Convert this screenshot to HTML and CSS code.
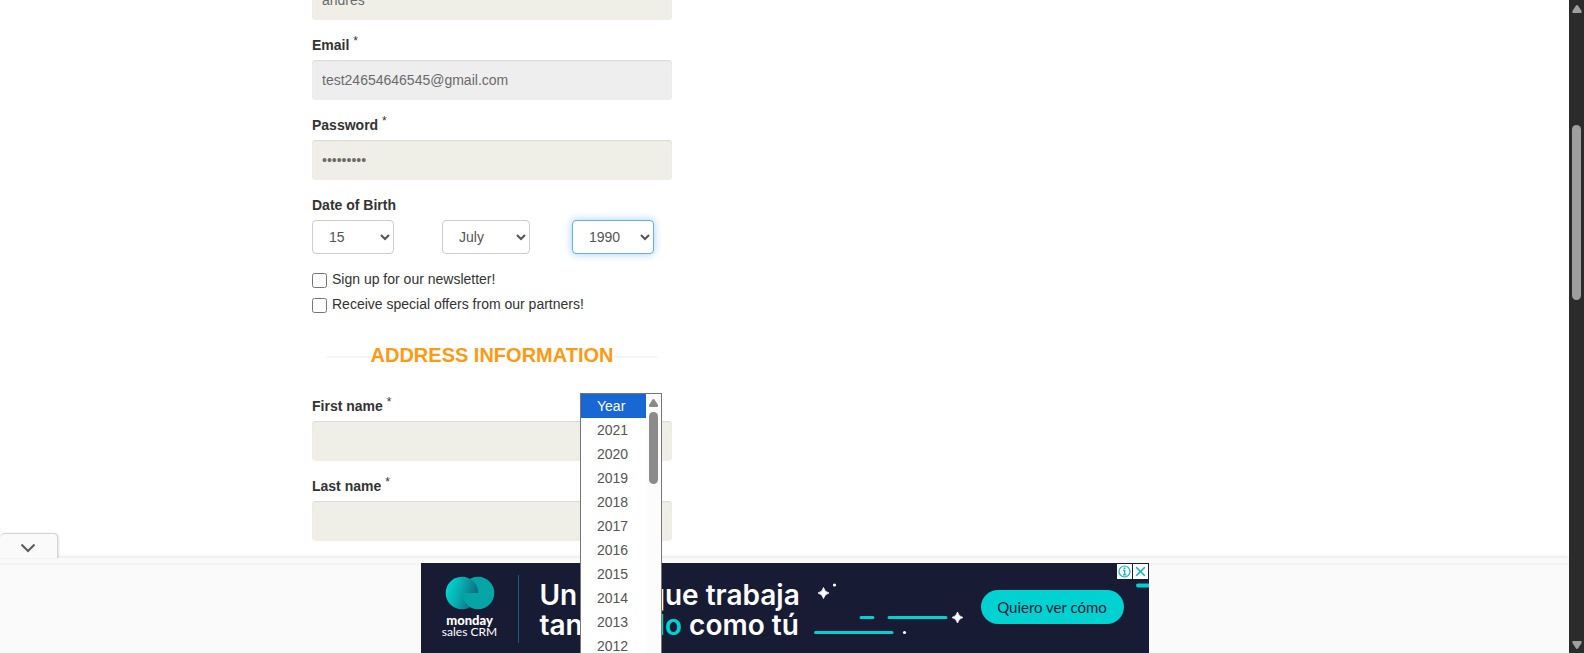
FILE: index.html
```html
<!DOCTYPE html>
<html lang="en">
<head>
<meta charset="utf-8">
<title>Create an account</title>
<link rel="stylesheet" href="styles.css">
</head>
<body>
<div class="page">
  <main class="content">
    <form class="form">
      <div class="field">
        <input class="text-input" id="username" type="text" value="andres" aria-label="Name">
      </div>
      <div class="field">
        <label class="field-label" for="email">Email <sup>*</sup></label>
        <input class="text-input text-input-muted" id="email" type="text" value="test24654646545@gmail.com">
      </div>
      <div class="field">
        <label class="field-label" for="password">Password <sup>*</sup></label>
        <input class="text-input" id="password" type="password" value="secret123">
      </div>
      <div class="field birth">
        <span class="field-label">Date of Birth</span>
        <div class="birth-row">
          <div class="birth-part"><select class="picker" aria-label="Day"><option>15</option></select></div>
          <div class="birth-part"><select class="picker picker-month" aria-label="Month"><option>July</option></select></div>
          <div class="birth-part">
            <select class="picker picker-active" aria-label="Year"><option>1990</option></select>
            <div class="popup">
              <ul class="options" role="listbox" aria-label="Year">
                <li class="option option-active" role="option">Year</li>
                <li class="option" role="option">2021</li>
                <li class="option" role="option">2020</li>
                <li class="option" role="option">2019</li>
                <li class="option" role="option">2018</li>
                <li class="option" role="option">2017</li>
                <li class="option" role="option">2016</li>
                <li class="option" role="option">2015</li>
                <li class="option" role="option">2014</li>
                <li class="option" role="option">2013</li>
                <li class="option" role="option">2012</li>
              </ul>
              <div class="popup-scroll">
                <svg width="9" height="8" viewBox="0 0 9 8"><path d="M4.5 0 Q5.2 0 5.8 1 L9 6 Q9.200 8 8 8 H1 Q-.2 8 0 6 L3.200 1 Q3.800 0 4.500 0Z" fill="#8b8b8b"/></svg>
                <div class="popup-thumb"></div>
              </div>
            </div>
          </div>
        </div>
      </div>
      <label class="check"><input class="check-box" type="checkbox">Sign up for our newsletter!</label>
      <label class="check"><input class="check-box" type="checkbox">Receive special offers from our partners!</label>
      <h3 class="heading"><span class="heading-text">Address information</span></h3>
      <div class="field">
        <label class="field-label" for="first">First name <sup>*</sup></label>
        <input class="text-input" id="first" type="text">
      </div>
      <div class="field">
        <label class="field-label" for="last">Last name <sup>*</sup></label>
        <input class="text-input" id="last" type="text">
      </div>
    </form>
  </main>

  <div class="dock">
    <button class="dock-toggle" type="button" aria-label="Collapse">
      <svg width="16" height="10" viewBox="0 0 16 10"><path d="M1.500 1.500 L8 8 L14.500 1.500" fill="none" stroke="#5f5f5f" stroke-width="2.200"/></svg>
    </button>
    <div class="dock-edge"></div>
    <div class="dock-body">
      <div class="ad">
        <svg class="ad-art" width="728" height="90" viewBox="0 0 728 90">
          <g stroke="#00d2d2" stroke-width="3" stroke-linecap="round">
            <path d="M440 54.500H452M468 54.500H525M394.500 69.500H471"/>
            <path d="M717 22.500H732" stroke-width="4"/>
          </g>
          <g fill="#fff">
            <path d="M402.500 24.500Q403.500 29 408 30Q403.500 31 402.500 35.500Q401.500 31 397 30Q401.500 29 402.500 24.500Z" stroke="#fff" stroke-width=".8"/>
            <path d="M536.500 49Q537.500 53.500 542 54.500Q537.500 55.500 536.500 60Q535.500 55.500 531 54.500Q535.500 53.500 536.500 49Z" stroke="#fff" stroke-width=".8"/>
            <circle cx="413.500" cy="22" r="1.600"/>
            <circle cx="483.500" cy="69.500" r="1.600"/>
          </g>
        </svg>
        <div class="brand">
          <svg width="50" height="34" viewBox="0 0 50 34">
            <defs><linearGradient id="orb" x1="0" y1=".3" x2="1" y2=".6"><stop offset="0" stop-color="#00d8d5"/><stop offset=".45" stop-color="#08aaae"/><stop offset="1" stop-color="#126078"/></linearGradient></defs>
            <circle cx="33" cy="17" r="16.300" fill="#05a5a5"/>
            <path d="M17 .700A16.300 16.300 0 1 0 25 31.200Q17.500 26 17 17H33.300A16.300 16.300 0 0 0 17 .700Z" fill="url(#orb)"/>
          </svg>
          <span class="brand-name">monday</span>
          <span class="brand-sub">sales CRM</span>
        </div>
        <div class="slogan">
          <span>Un</span><span>que trabaja</span>
          <span>tan</span><span><span class="accent">do</span> como tú</span>
        </div>
        <button class="cta" type="button">Quiero ver cómo</button>
        <div class="ad-tools">
          <button class="ad-tool" type="button" aria-label="Ad info"><svg width="15" height="15" viewBox="0 0 15 15"><circle cx="7.500" cy="7.500" r="5.500" fill="none" stroke="#14b1c7" stroke-width="1.200"/><path d="M6 6.500H7.700V10.700M5.800 10.800H9.400" fill="none" stroke="#14b1c7" stroke-width="1.300"/><circle cx="7.500" cy="4.300" r="1" fill="#14b1c7"/></svg></button>
          <button class="ad-tool" type="button" aria-label="Close ad"><svg width="15" height="15" viewBox="0 0 15 15"><path d="M3.200 3.200L11.800 11.800M11.800 3.200L3.200 11.800" fill="none" stroke="#14b1c7" stroke-width="1.600"/></svg></button>
        </div>
      </div>
    </div>
  </div>
</div>
<div class="scrollbar">
  <svg width="10" height="8" viewBox="0 0 10 8"><path d="M5 0Q5.700 0 6.300 1L9.600 6Q10 8 9 8H1Q0 8 .4 6L3.700 1Q4.300 0 5 0Z" fill="#9f9f9f"/></svg>
  <div class="scrollbar-track"><div class="scrollbar-thumb"></div></div>
  <svg width="10" height="8" viewBox="0 0 10 8"><path d="M5 8Q5.700 8 6.300 7L9.600 2Q10 0 9 0H1Q0 0 .4 2L3.700 7Q4.300 8 5 8Z" fill="#9f9f9f"/></svg>
</div>
</body>
</html>
```

FILE: styles.css
```css
* { box-sizing: border-box; }

body {
  margin: 0;
  height: 100vh;
  display: flex;
  overflow: hidden;
  background: #fff;
  color: #333;
  font: 14px/20px "Liberation Sans", Arial, sans-serif;
}

svg { display: block; }

button { font: inherit; cursor: pointer; }

.page {
  position: relative;
  flex: 1;
  min-width: 0;
  overflow: hidden;
}

.content {
  max-width: 945px;
  margin: 0 auto;
}

/* The page is scrolled so that the first field is half out of view. */
.form {
  width: 360px;
  margin-top: -20px;
}

.field { margin-bottom: 15px; }

.field-label {
  display: block;
  margin-bottom: 5px;
  font-weight: 700;
}

.field-label sup {
  font-size: 12px;
  line-height: 0;
  font-weight: 400;
  vertical-align: 5px;
}

.text-input {
  display: block;
  width: 100%;
  height: 40px;
  padding: 6px 10px;
  border: 0;
  border-radius: 4px;
  background: #efefe7;
  box-shadow: inset 0 1px 1px rgba(0, 0, 0, .09);
  color: #6b6b6b;
  font: inherit;
}

.text-input-muted { background: #eee; }

.birth-row {
  display: grid;
  grid-template-columns: repeat(3, 130px);
}

.birth-part { position: relative; }

.picker {
  display: block;
  width: 82px;
  height: 34px;
  padding: 6px 0 6px 12px;
  border: 1px solid #ccc;
  border-radius: 4px;
  background: #fff;
  color: #555;
  font: inherit;
}

.picker-month { width: 88px; }

.picker-active {
  border-color: #66afe9;
  box-shadow: 0 0 8px rgba(102, 175, 233, .6);
}

.popup {
  position: absolute;
  z-index: 10;
  top: 173px;
  left: 8px;
  width: 82px;
  display: flex;
  border: 1px solid #767676;
  background: #fff;
}

.options {
  flex: 1;
  margin: 0;
  padding: 0;
  list-style: none;
}

.option {
  padding: 2px 16px;
  color: #555;
}

.option-active {
  background: #1967d2;
  color: #fff;
}

.popup-scroll {
  width: 15px;
  padding: 5px 3px;
  background: #fcfcfc;
}

.popup-thumb {
  height: 72px;
  margin-top: 5px;
  border-radius: 5px;
  background: #8b8b8b;
}

.check {
  display: flex;
  gap: 5px;
  height: 25px;
}

.check-box {
  width: 15px;
  height: 15px;
  margin: 4px 0 0;
}

.heading {
  margin: 25px 15px 30px;
  font-size: 20px;
  line-height: 22px;
  text-align: center;
  text-transform: uppercase;
  color: #ff9912;
  background: linear-gradient(#f4f4f4, #f4f4f4) 0 12px / 100% 2px no-repeat;
}

.heading-text { background: #fff; }

.dock {
  position: absolute;
  right: 0;
  bottom: 0;
  left: 0;
}

.dock-toggle {
  position: relative;
  display: grid;
  place-items: center;
  width: 58px;
  height: 25px;
  padding: 3px 2px 0 0;
  border: solid #d4d4d4;
  border-width: 1px 1px 0 0;
  border-radius: 5px 5px 0 0;
  background: #fafafa;
  box-shadow: 1px 0 2px rgba(0, 0, 0, .12);
}

.dock-edge {
  height: 5px;
  background: #fafafa;
  box-shadow: 0 -1px 4px rgba(0, 0, 0, .12);
}

.dock-body { background: linear-gradient(#f1f1f1, #fafafa 3px); }

.ad {
  position: relative;
  display: flex;
  width: 728px;
  height: 90px;
  margin: 0 auto;
  background: #181b34;
  color: #fff;
  overflow: hidden;
}

.ad-art {
  position: absolute;
  inset: 0;
}

.brand {
  display: flex;
  flex-direction: column;
  align-items: center;
  width: 98px;
  height: 68px;
  margin-top: 12px;
  padding-left: 1px;
  border-right: 1px solid #126078;
  font-family: Lato, sans-serif;
  line-height: 12px;
}

.brand svg { margin: 1px 0 4px; flex: none; }

.brand-name {
  font-size: 13px;
  font-weight: 900;
}

.brand-sub { font-size: 12px; }

.slogan {
  display: grid;
  grid-template-columns: 108px auto;
  align-content: start;
  margin: 17px 0 0 21px;
  font: 600 28px/30px Inter, sans-serif;
  white-space: nowrap;
}

.accent { color: #00d2d2; }

.cta {
  width: 143px;
  height: 34px;
  margin: 27px 25px 0 auto;
  padding: 0;
  border: 0;
  border-radius: 17px;
  background: #00d2d2;
  color: #181b34;
  font: 15px/20px Lato, sans-serif;
}

.ad-tools {
  position: absolute;
  top: 1px;
  right: 1px;
  display: flex;
  gap: 1px;
}

.ad-tool {
  padding: 0;
  border: 0;
  background: #fff;
}

.scrollbar {
  display: flex;
  flex-direction: column;
  align-items: center;
  width: 15px;
  padding: 5px 0 4px;
  background: #2b2b2b;
}

.scrollbar-track {
  flex: 1;
  width: 9px;
}

.scrollbar-thumb {
  height: 175px;
  margin-top: 112px;
  border-radius: 5px;
  background: #9f9f9f;
}
```
